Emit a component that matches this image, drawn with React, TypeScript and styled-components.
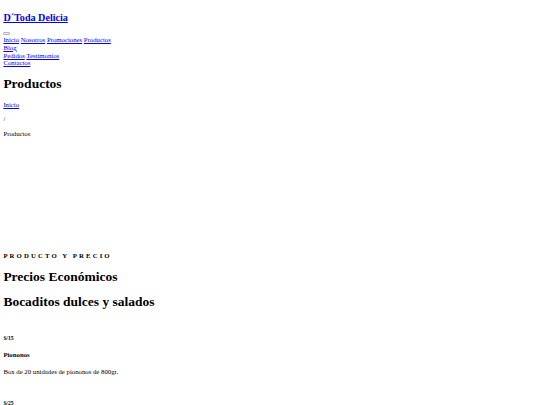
import React from "react";
import styled, { createGlobalStyle } from "styled-components";

// The page is laid out at 1280px width and shown at 540px.
const S = 540 / 1280;
const px = (n: number) => `${(n * S).toFixed(3)}px`;

const GlobalStyle = createGlobalStyle`
  html, body { margin: 0; padding: 0; background: #ffffff; }
  body {
    padding: ${px(8)};
    font-family: "Liberation Serif", "Times New Roman", serif;
    font-size: ${px(16)};
    line-height: 1.15;
    color: #000000;
  }
  a { color: #0000ee; text-decoration: underline; }
`;

const Header = styled.header`
  display: block;
`;

const Brand = styled.h2`
  font-size: ${px(24)};
  font-weight: bold;
  margin: ${px(19.92)} 0;
`;

const Toggler = styled.button`
  display: block;
  box-sizing: border-box;
  width: ${px(16)};
  height: ${px(7)};
  padding: 0;
  margin: ${px(8.5)} 0 ${px(3.3)};
  border: 1px solid #b4b4b4;
  border-radius: 1px;
  background: #f3f3f3;
`;

const Nav = styled.nav`
  display: block;
  font-size: ${px(16)};
`;

const NavLine = styled.div`
  display: block;
`;

const PageTitle = styled.h1`
  font-size: ${px(32)};
  font-weight: bold;
  margin: ${px(21.44)} 0;
`;

const Crumb = styled.p`
  margin: ${px(16)} 0;
`;

const Hero = styled.div`
  height: ${px(235)};
`;

const Eyebrow = styled.h4`
  font-size: ${px(16)};
  font-weight: bold;
  letter-spacing: ${px(5)};
  margin: ${px(21.28)} 0;
`;

const Title = styled.h1`
  font-size: ${px(32)};
  font-weight: bold;
  margin: ${px(21.44)} 0;
`;

const Card = styled.div`
  padding: ${px(18)} 0 ${px(2)};
`;

const Price = styled.h5`
  font-size: ${px(13.28)};
  font-weight: bold;
  margin: ${px(22.18)} 0;
`;

const Name = styled.h4`
  font-size: ${px(16)};
  font-weight: bold;
  margin: ${px(21.28)} 0;
`;

const Desc = styled.p`
  margin: ${px(16)} 0;
`;

const products = [
  { price: "S/15", name: "Piononos", desc: "Box de 20 unidades de piononos de 800gr." },
  { price: "S/25", name: "Alfajores", desc: "Box de 50 unidades de alfajores de maicena." },
  { price: "S/30", name: "Empanaditas", desc: "Box de 25 unidades de empanaditas de carne." },
];

export default function App() {
  return (
    <>
      <GlobalStyle />
      <Header>
        <Brand>
          <a href="#">D´Toda Delicia</a>
        </Brand>
        <Toggler type="button" aria-label="menu" />
        <Nav>
          <a href="#">Inicio</a> <a href="#">Nosotros</a> <a href="#">Promociones</a>{" "}
          <a href="#">Productos</a>
          <NavLine>
            <a href="#">Blog</a>
          </NavLine>
          <a href="#">Pedidos</a> <a href="#">Testimonios</a>
          <NavLine>
            <a href="#">Contactos</a>
          </NavLine>
        </Nav>
      </Header>
      <main>
        <PageTitle>Productos</PageTitle>
        <Crumb>
          <a href="#">Inicio</a>
        </Crumb>
        <Crumb>/</Crumb>
        <Crumb>Productos</Crumb>
        <Hero />
        <section>
          <Eyebrow>PRODUCTO Y PRECIO</Eyebrow>
          <Title>Precios Económicos</Title>
          <Title>Bocaditos dulces y salados</Title>
          {products.map((p) => (
            <Card key={p.price}>
              <Price>{p.price}</Price>
              <Name>{p.name}</Name>
              <Desc>{p.desc}</Desc>
            </Card>
          ))}
        </section>
      </main>
    </>
  );
}
